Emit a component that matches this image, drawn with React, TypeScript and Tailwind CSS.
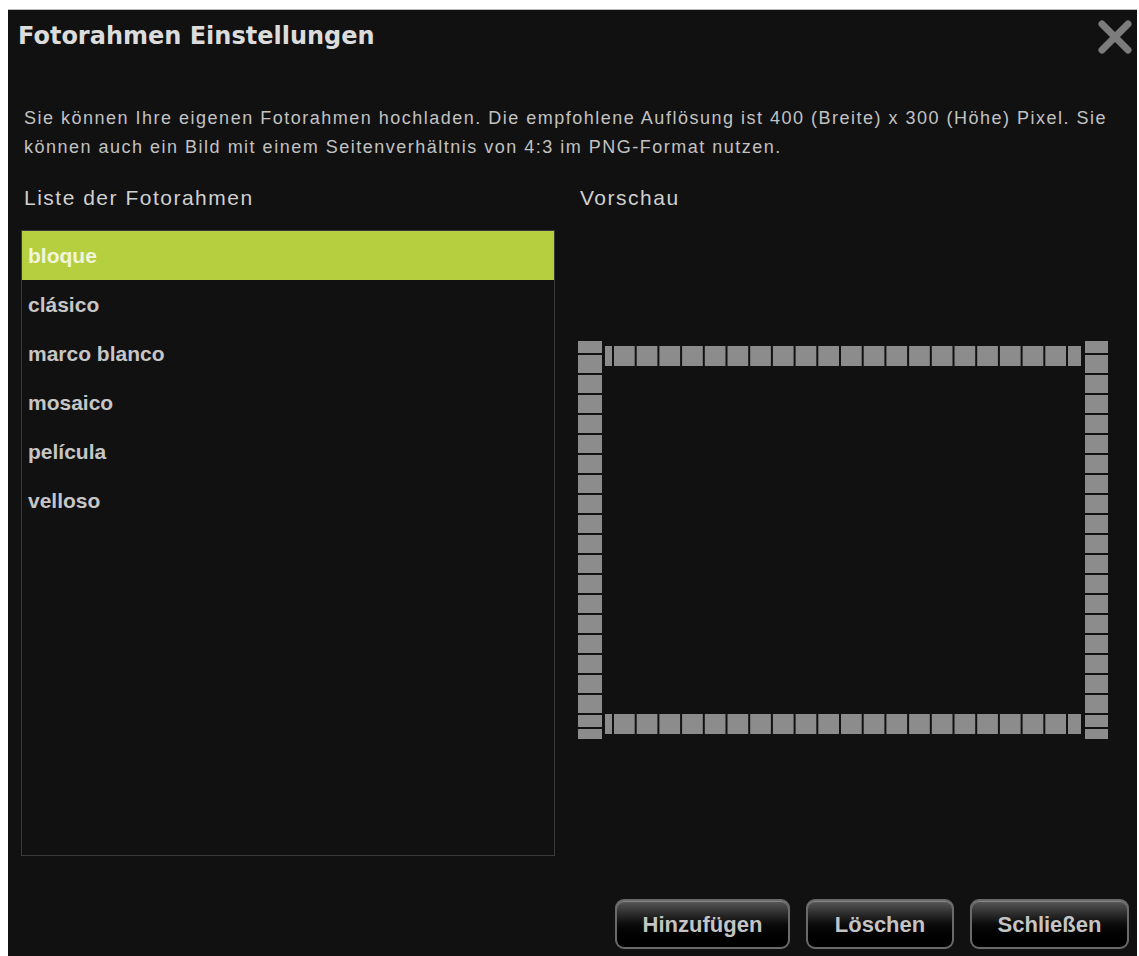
import React from 'react';

const FRAMES = ['bloque', 'clásico', 'marco blanco', 'mosaico', 'película', 'velloso'];

// Block-style frame preview, drawn as tiles
const BlockFrame: React.FC = () => {
  const W = 531;
  const H = 398;
  const tile = '#8c8c8c';
  const hTiles: { x: number; w: number }[] = [{ x: 27, w: 7 }];
  for (let x = 36; x < 503; x += 22.7) {
    hTiles.push({ x, w: Math.min(20.7, 503 - x) });
  }
  const vTiles: { y: number; h: number }[] = [{ y: 0, h: 12 }];
  for (let y = 14; y < 386; y += 20) {
    vTiles.push({ y, h: Math.min(18, 386 - y) });
  }
  vTiles.push({ y: 388, h: 10 });

  return (
    <svg width={W} height={H} viewBox={`0 0 ${W} ${H}`} style={{ filter: 'blur(0.6px)' }}>
      {hTiles.map((t, i) => (
        <React.Fragment key={`h${i}`}>
          <rect x={t.x} y={5} width={t.w} height={20} fill={tile} />
          <rect x={t.x} y={373} width={t.w} height={20} fill={tile} />
        </React.Fragment>
      ))}
      {vTiles.map((t, i) => (
        <React.Fragment key={`v${i}`}>
          <rect x={0} y={t.y} width={24} height={t.h} fill={tile} />
          <rect x={507} y={t.y} width={23} height={t.h} fill={tile} />
        </React.Fragment>
      ))}
    </svg>
  );
};

const DialogButton: React.FC<{ label: string; width: string }> = ({ label, width }) => (
  <button
    className={`${width} h-[50px] rounded-[9px] border-2 border-[#6a6a6a] bg-gradient-to-b from-[#5a5a5a] via-[#0c0c0c] to-[#000] text-[22px] font-bold text-[#c4c4c4] shadow-[inset_0_1px_0_#888]`}
    style={{ fontFamily: '"Liberation Sans", Arial, sans-serif' }}
  >
    {label}
  </button>
);

export default function App() {
  return (
    <div className="h-[956px] w-[1139px] bg-white pl-[8px] pr-[2px] pt-[9px]">
      <div
        className="flex h-full flex-col border-t border-[#bbb] bg-[#111]"
        style={{ fontFamily: '"Liberation Sans", Arial, sans-serif' }}
      >
        <div className="flex h-[52px] items-center justify-between pl-[10px] pr-[4px]">
          <h1
            className="text-[24px] font-bold text-[#dcdcdc]"
            style={{ fontFamily: '"DejaVu Sans", Verdana, sans-serif' }}
          >
            Fotorahmen Einstellungen
          </h1>
          <svg width="36" height="36" viewBox="0 0 36 36" className="mb-[-2px]">
            <path d="M5 5 L31 31 M31 5 L5 31" stroke="#7c7c7c" strokeWidth="7" strokeLinecap="round" />
          </svg>
        </div>

        <p className="mt-[42px] pl-[16px] pr-[10px] text-[18px] leading-[29px] tracking-[1.5px] text-[#c2c2c2]">
          Sie können Ihre eigenen Fotorahmen hochladen. Die empfohlene Auflösung ist 400 (Breite) x 300 (Höhe) Pixel. Sie
          <br />
          können auch ein Bild mit einem Seitenverhältnis von 4:3 im PNG-Format nutzen.
        </p>

        <div className="mt-[24px] flex pl-[13px]">
          <div className="w-[534px]">
            <div className="pl-[3px] text-[21px] leading-[24px] tracking-[1.5px] text-[#d0d0d0]">Liste der Fotorahmen</div>
            <ul className="mt-[20px] h-[626px] border border-[#3a3a3a]">
              {FRAMES.map((name, i) => (
                <li
                  key={name}
                  className={`flex h-[49px] items-center pl-[6px] text-[21px] font-bold ${
                    i === 0 ? 'bg-[#b6cf3f] text-[#f2f5dc]' : 'text-[#c6c6c6]'
                  }`}
                >
                  {name}
                </li>
              ))}
            </ul>
          </div>
          <div className="ml-[23px] flex-1">
            <div className="pl-[2px] text-[21px] leading-[24px] tracking-[1.5px] text-[#d0d0d0]">Vorschau</div>
            <div className="mt-[131px]">
              <BlockFrame />
            </div>
          </div>
        </div>

        <div className="mt-auto flex justify-end gap-[16px] pb-[7px] pr-[8px]">
          <DialogButton label="Hinzufügen" width="w-[175px]" />
          <DialogButton label="Löschen" width="w-[148px]" />
          <DialogButton label="Schließen" width="w-[159px]" />
        </div>
      </div>
    </div>
  );
}
